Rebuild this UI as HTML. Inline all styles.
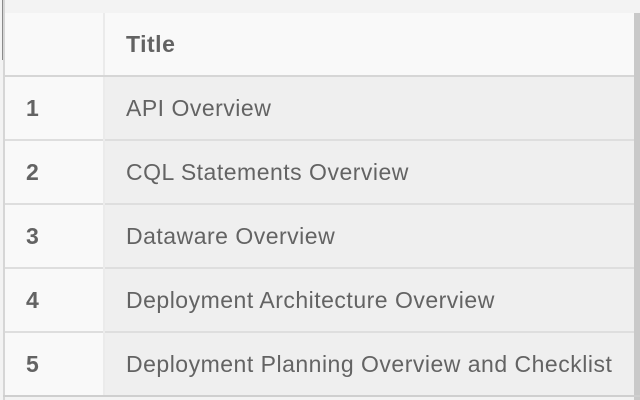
<!DOCTYPE html>
<html><head><style>
html,body{margin:0;padding:0;width:640px;height:400px;overflow:hidden;background:#f3f3f3;font-family:"Liberation Sans",Arial,sans-serif;}
.lb{position:absolute;left:3px;top:0;width:2px;height:400px;background:#d6d6d6;}
.ld{position:absolute;left:2px;top:0;width:1px;height:60px;background:#8a8a8a;}
.rb{position:absolute;left:634px;top:13px;width:6px;height:387px;background:#c9c9c9;}
.bb{position:absolute;left:3px;top:395px;width:637px;height:2px;background:#cfcfcf;}
table{position:absolute;left:5px;top:13px;width:629px;border-collapse:collapse;}
td,th{padding:0;height:62px;font-size:23px;letter-spacing:0.5px;color:#636363;text-align:left;vertical-align:middle;white-space:nowrap;}
th{font-weight:bold;background:#f9f9f9;border-bottom:2px solid #d6d6d6;}
td{border-top:2px solid #dedede;}
tr:nth-child(2) td{border-top:none;}
.c1{width:99px;padding-left:21px;box-sizing:border-box;font-weight:bold;background:#f9f9f9;border-right:2px solid #ebebeb;}
th.c2{padding-left:21px;background:#f9f9f9;}
td.c2{padding-left:21px;background:#efefef;}
</style></head><body>
<div class="lb"></div><div class="ld"></div>
<table>
<tr><th class="c1"></th><th class="c2">Title</th></tr>
<tr><td class="c1">1</td><td class="c2">API Overview</td></tr>
<tr><td class="c1">2</td><td class="c2">CQL Statements Overview</td></tr>
<tr><td class="c1">3</td><td class="c2">Dataware Overview</td></tr>
<tr><td class="c1">4</td><td class="c2">Deployment Architecture Overview</td></tr>
<tr><td class="c1">5</td><td class="c2">Deployment Planning Overview and Checklist</td></tr>
</table>
<div class="rb"></div><div class="bb"></div>
</body></html>
